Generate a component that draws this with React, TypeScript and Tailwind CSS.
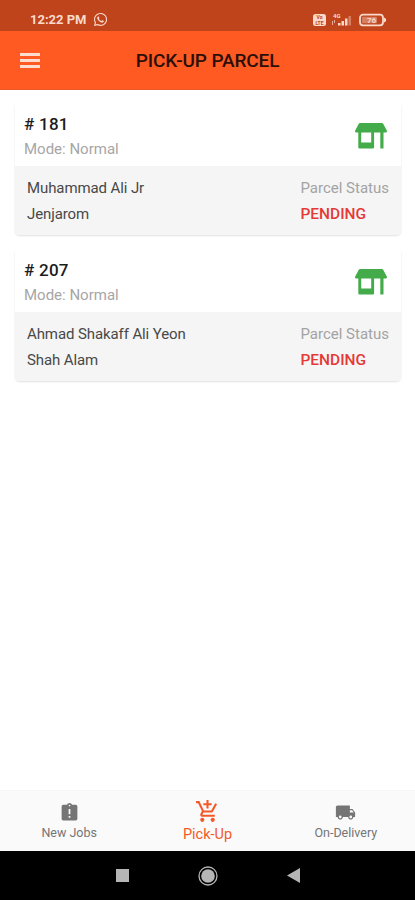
import { FaWhatsapp } from 'react-icons/fa'
import { MdAddShoppingCart, MdAssignmentLate, MdLocalShipping } from 'react-icons/md'

type Parcel = {
  id: number
  mode: string
  name: string
  place: string
  status: string
}

const parcels: Parcel[] = [
  { id: 181, mode: 'Normal', name: 'Muhammad Ali Jr', place: 'Jenjarom', status: 'PENDING' },
  { id: 207, mode: 'Normal', name: 'Ahmad Shakaff Ali Yeon', place: 'Shah Alam', status: 'PENDING' },
]

function StatusBar() {
  return (
    <div className="h-[31px] shrink-0 bg-[#bf431b] text-[#fbd9cb] flex items-center justify-between pl-[30px] pr-[29px] pt-[8px]">
      <div className="flex items-center gap-[6px]">
        <span className="text-[13px] leading-none font-bold whitespace-nowrap">12:22 PM</span>
        <FaWhatsapp size={15} />
      </div>
      <svg width="73" height="14" viewBox="0 0 73 14" fill="currentColor">
        {/* VoLTE */}
        <rect x="0" y="1" width="13" height="12" rx="2.5" />
        <text x="6.5" y="6.3" fontSize="5" fontWeight="700" textAnchor="middle" fill="#bf431b">Vo</text>
        <text x="6.5" y="11.5" fontSize="5" fontWeight="700" textAnchor="middle" fill="#bf431b">LTE</text>
        {/* signal */}
        <text x="20" y="5" fontSize="6" fontWeight="700">4G</text>
        <path d="M19 8h1v4h-1zM21 7h1v3h-1z" opacity=".7" />
        <path d="M25 10h2.500v2.500H25zM28.500 8H31v4.500h-2.500zM32 5.500h2.500v7H32z" />
        <path d="M35.500 3H38v9.500h-2.500z" opacity=".4" />
        {/* battery */}
        <rect x="47" y="1.700" width="23" height="10.600" rx="3" fill="none" stroke="currentColor" strokeWidth="1.800" />
        <rect x="49" y="3.700" width="15" height="6.600" rx="1" opacity=".4" />
        <path d="M71 4.500l2 1.200v2.600l-2 1.200z" />
        <text x="58.500" y="10" fontSize="8" fontWeight="700" textAnchor="middle">76</text>
      </svg>
    </div>
  )
}

function Header() {
  return (
    <header className="relative h-[59px] shrink-0 bg-[#ff5a22] border-b border-[#e9572a] flex items-center justify-center">
      <button className="absolute left-[20px] top-[22px] w-[20px] h-[15px] flex flex-col justify-between" aria-label="Menu">
        <span className="h-[3px] w-full bg-[#ffdccd]" />
        <span className="h-[3px] w-full bg-[#ffdccd]" />
        <span className="h-[3px] w-full bg-[#ffdccd]" />
      </button>
      <h1 className="mt-[3px] text-[19px] tracking-[-0.12px] font-medium text-[#2b0f07] whitespace-nowrap">PICK-UP PARCEL</h1>
    </header>
  )
}

function StoreIcon() {
  return (
    <svg className="mt-[10px] text-[#43ab49]" width="32" height="26" viewBox="0 0 32 26" fill="currentColor">
      <path d="M5 0h22q.8 0 1.200.7l3.600 6.800q.5 1.900-1.300 2H1.500q-1.800-.1-1.300-2L3.800.7Q4.200 0 5 0z" />
      <path d="M3.300 9h2.900v10.500h10V9h2.900v15.200q0 1.300-1.300 1.300H4.600q-1.300 0-1.300-1.300z" />
      <path d="M25.300 9h3.200v16q0 .5-.5.5h-2.200q-.5 0-.5-.5z" />
    </svg>
  )
}

function ParcelCard({ parcel }: { parcel: Parcel }) {
  return (
    <div className="h-[130px] rounded-b-[5px] overflow-hidden bg-white shadow-[0_1px_2px_rgba(0,0,0,0.13)]">
      <div className="h-[61px] flex items-start justify-between pl-[9px] pr-[14px] pt-[8px]">
        <div>
          <div className="text-[17px] tracking-[0.25px] leading-[22px] font-medium text-[#1c1c1c]"># {parcel.id}</div>
          <div className="mt-[4px] text-[15px] leading-[20px] text-[#a6a6a6]">Mode: {parcel.mode}</div>
        </div>
        <StoreIcon />
      </div>
      <div className="h-[69px] bg-[#f5f5f5] flex justify-between pl-[12px] pr-[12px] pt-[9px] text-[15px] leading-[26px] whitespace-nowrap">
        <div className="text-[#484848] tracking-[-0.1px]">
          <div>{parcel.name}</div>
          <div>{parcel.place}</div>
        </div>
        <div>
          <div className="text-[#a3a3a3]">Parcel Status</div>
          <div className="text-[15.5px] font-medium text-[#e53935]">{parcel.status}</div>
        </div>
      </div>
    </div>
  )
}

function TabBar() {
  return (
    <nav className="h-[61px] shrink-0 bg-[#fafafa] border-t border-[#f7f7f7] grid grid-cols-3 text-[#757575] whitespace-nowrap">
      <div className="flex flex-col items-center pt-[11px]">
        <MdAssignmentLate size={21} />
        <span className="mt-px text-[12.5px] leading-[18px]">New Jobs</span>
      </div>
      <div className="flex flex-col items-center pt-[8px] text-[#f4592a]">
        <MdAddShoppingCart size={25} />
        <span className="mt-px text-[14.5px] leading-[20px]">Pick-Up</span>
      </div>
      <div className="flex flex-col items-center pt-[11px]">
        <MdLocalShipping size={21} />
        <span className="mt-px text-[12.5px] leading-[18px]">On-Delivery</span>
      </div>
    </nav>
  )
}

function SystemNav() {
  return (
    <div className="h-[49px] shrink-0 bg-black flex items-center justify-center gap-[69px] text-[#b5b5b5]">
      <span className="w-[13px] h-[13px] bg-[#b5b5b5]" />
      <svg width="20" height="20" viewBox="0 0 20 20">
        <circle cx="10" cy="10" r="9" fill="none" stroke="currentColor" strokeWidth="1.300" />
        <circle cx="10" cy="10" r="6.800" fill="currentColor" />
      </svg>
      <svg width="13" height="15" viewBox="0 0 13 15">
        <path d="M13 0v15L0 7.500z" fill="currentColor" />
      </svg>
    </div>
  )
}

export default function App() {
  return (
    <div className="w-[415px] h-[900px] bg-white flex flex-col overflow-hidden font-[Roboto,sans-serif]">
      <StatusBar />
      <Header />
      <main className="flex-1 flex flex-col gap-[16px] pt-[15px] pl-[15px] pr-[14px]">
        {parcels.map((p) => (
          <ParcelCard key={p.id} parcel={p} />
        ))}
      </main>
      <TabBar />
      <SystemNav />
    </div>
  )
}
